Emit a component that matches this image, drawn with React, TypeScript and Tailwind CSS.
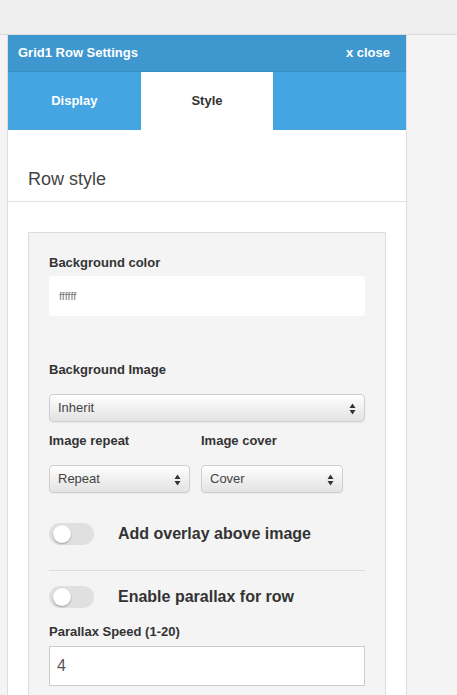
import React from "react";

const font = { fontFamily: '"Liberation Sans", Arial, sans-serif' };

function Select({ label, className }: { label: string; className: string }) {
  return (
    <div
      className={`relative h-[28px] rounded-[4px] border border-[#cfcfcf] bg-gradient-to-b from-[#ffffff] via-[#f0f0f0] to-[#e3e3e3] shadow-[inset_0_1px_0_#fff,0_1px_1px_rgba(0,0,0,0.05)] flex items-center pl-[8px] text-[13px] text-[#444] ${className}`}
    >
      <span>{label}</span>
      <svg className="absolute right-[8px] top-[8px]" width="7" height="12" viewBox="0 0 7 12">
        <path d="M3.5 0.5 L6.5 5 L0.5 5 Z" fill="#333" />
        <path d="M3.5 11.5 L6.5 7 L0.5 7 Z" fill="#333" />
      </svg>
    </div>
  );
}

function Toggle({ label }: { label: string }) {
  return (
    <div className="flex items-center h-[22px]">
      <div className="relative w-[45px] h-[22px] rounded-full bg-[#e0e0e0]">
        <div className="absolute left-[4px] top-[2px] w-[18px] h-[18px] rounded-full bg-white shadow-[0_1px_2px_rgba(0,0,0,0.3)]" />
      </div>
      <span className="ml-[24px] text-[16px] font-bold text-[#333]">{label}</span>
    </div>
  );
}

export default function App() {
  return (
    <div style={font} className="w-[457px] h-[695px] overflow-hidden bg-[#f4f4f4]">
      <div className="h-[35px] bg-[#efefef] border-b border-[#dcdcdc]" />
      <div className="ml-[7px] w-[400px] bg-white border-x border-[#dedede] min-h-[700px]">
        <div className="h-[37px] bg-[#3f97d0] flex items-center justify-between pl-[10px] pr-[16px] text-white text-[13px] font-bold border-b border-[#3b8fc6]">
          <span>Grid1 Row Settings</span>
          <span>x close</span>
        </div>
        <div className="grid grid-cols-3 h-[58px] bg-[#44a5e2] text-[13px] font-bold">
          <div className="flex items-center justify-center text-white">Display</div>
          <div className="flex items-center justify-center bg-white text-[#333]">Style</div>
          <div />
        </div>
        <div className="pt-[38px] pb-[11px] pl-[20px] border-b border-[#e3e3e3] text-[18px] text-[#444] leading-[22px]">
          Row style
        </div>
        <div className="mt-[30px] mx-[20px] border border-[#dddddd] bg-[#f4f4f4] pl-[20px] pr-[20px] pt-[22px] pb-[10px]">
          <div className="text-[13px] font-bold text-[#333] leading-[16px]">Background color</div>
          <div className="mt-[5px] h-[40px] rounded-[4px] bg-white flex items-center pl-[10px] text-[11px] text-[#777]">
            ffffff
          </div>
          <div className="mt-[46px] text-[13px] font-bold text-[#333] leading-[16px]">Background Image</div>
          <Select label="Inherit" className="mt-[16px] w-full" />
          <div className="mt-[11px] flex gap-[11px]">
            <div className="w-[141px]">
              <div className="text-[13px] font-bold text-[#333] leading-[16px]">Image repeat</div>
              <Select label="Repeat" className="mt-[16px] w-[141px]" />
            </div>
            <div className="w-[142px]">
              <div className="text-[13px] font-bold text-[#333] leading-[16px]">Image cover</div>
              <Select label="Cover" className="mt-[16px] w-[142px]" />
            </div>
          </div>
          <div className="mt-[30px]">
            <Toggle label="Add overlay above image" />
          </div>
          <div className="mt-[25px] border-t border-[#dcdcdc]" />
          <div className="mt-[15px]">
            <Toggle label="Enable parallax for row" />
          </div>
          <div className="mt-[16px] text-[13px] font-bold text-[#333] leading-[16px]">Parallax Speed (1-20)</div>
          <div className="mt-[6px] h-[40px] border border-[#cccccc] bg-white flex items-center pl-[7px] text-[16px] text-[#555]">
            4
          </div>
          <div className="h-[40px]" />
        </div>
      </div>
    </div>
  );
}
